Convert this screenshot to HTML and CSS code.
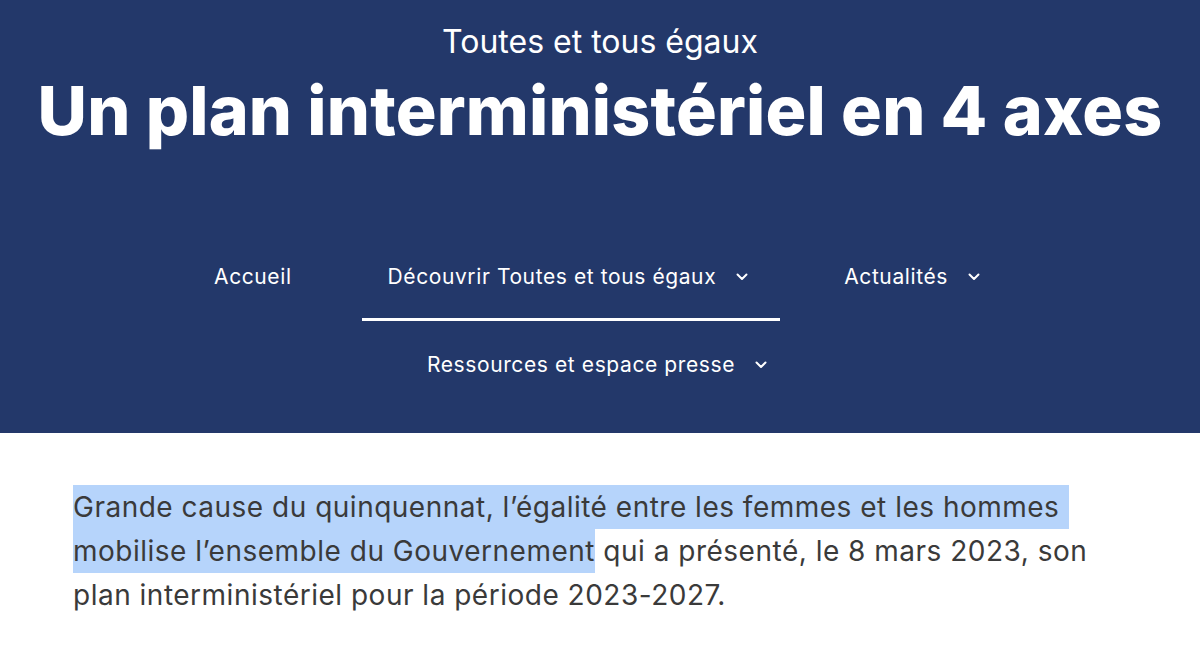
FILE: index.html
```html
<!DOCTYPE html>
<html lang="fr">
<head>
<meta charset="utf-8">
<title>Toutes et tous égaux</title>
<link rel="stylesheet" href="styles.css">
</head>
<body>
<header class="hero">
  <p class="kicker">Toutes et tous égaux</p>
  <h1 class="title">Un plan interministériel en 4 axes</h1>
  <nav class="nav">
    <ul class="nav-list">
      <li class="nav-item"><a class="nav-link" href="#">Accueil</a></li>
      <li class="nav-item is-active"><a class="nav-link" href="#">Découvrir Toutes et tous égaux<svg class="chev" viewBox="0 0 12 8" width="12" height="8"><path d="M1.5 1.5 L6 6 L10.5 1.5" fill="none" stroke="currentColor" stroke-width="2" stroke-linecap="round" stroke-linejoin="round"/></svg></a></li>
      <li class="nav-item"><a class="nav-link" href="#">Actualités<svg class="chev" viewBox="0 0 12 8" width="12" height="8"><path d="M1.5 1.5 L6 6 L10.5 1.5" fill="none" stroke="currentColor" stroke-width="2" stroke-linecap="round" stroke-linejoin="round"/></svg></a></li>
      <li class="nav-item"><a class="nav-link" href="#">Ressources et espace presse<svg class="chev" viewBox="0 0 12 8" width="12" height="8"><path d="M1.5 1.5 L6 6 L10.5 1.5" fill="none" stroke="currentColor" stroke-width="2" stroke-linecap="round" stroke-linejoin="round"/></svg></a></li>
    </ul>
  </nav>
</header>
<main class="content">
  <p class="lead"><span class="sel sel-1">Grande cause du quinquennat, l’égalité entre les femmes et les hommes</span><br><span class="sel">mobilise l’ensemble du Gouvernement</span> qui a présenté, le 8 mars 2023, son<br>plan interministériel pour la période 2023-2027.</p>
</main>
</body>
</html>
```

FILE: styles.css
```css
* { box-sizing: border-box; }
html, body { margin: 0; padding: 0; }
body {
  font-family: Inter, "Noto Sans", "DejaVu Sans", sans-serif;
  background: #ffffff;
  color: #3a3a3a;
}
.hero {
  background: #23386a;
  color: #ffffff;
  text-align: center;
  padding: 22px 0 24px;
}
.kicker {
  margin: 0;
  font-size: 32px;
  line-height: 40px;
  font-weight: 400;
}
.title {
  margin: 6px 0 0;
  font-size: 68px;
  line-height: 84px;
  font-weight: 800;
  letter-spacing: 0.2px;
}
.nav { margin-top: 81px; }
.nav-list {
  list-style: none;
  margin: 0 auto;
  padding: 0;
  max-width: 1000px;
  display: flex;
  flex-wrap: wrap;
  justify-content: center;
  column-gap: 38px;
}
.nav-item { border-bottom: 3px solid transparent; }
.nav-item.is-active { border-bottom-color: #ffffff; }
.nav-link {
  display: flex;
  align-items: center;
  gap: 20px;
  padding: 32px 32px 29px 26px;
  font-size: 21px;
  line-height: 24px;
  letter-spacing: 0.6px;
  color: #ffffff;
  text-decoration: none;
}
.chev { display: block; }
.content {
  padding: 52px 73px;
}
.lead {
  margin: 0;
  font-size: 28px;
  line-height: 44px;
  letter-spacing: 0.5px;
}
.sel {
  background: #b6d4fb;
  padding: 5px 0;
}
.sel-1 { padding-right: 10px; }
```
